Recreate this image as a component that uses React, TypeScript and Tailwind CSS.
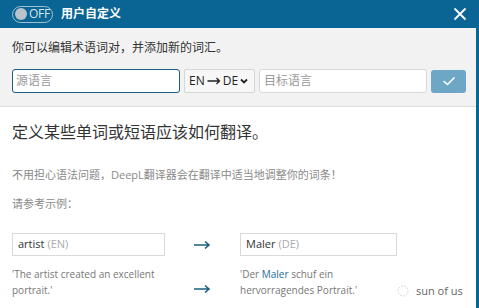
import React from "react";

const font = "font-['Open_Sans','Noto_Sans_CJK_SC',sans-serif]";

const Arrow = () => (
  <svg width="18" height="10" viewBox="0 0 18 10" className="text-[#1d5f80]">
    <path d="M1 5h15M12 1.5l4 3.5-4 3.5" fill="none" stroke="currentColor" strokeWidth="1.6" />
  </svg>
);

export default function App() {
  return (
    <div className={`relative w-[479px] h-[308px] bg-white flex flex-col overflow-hidden ${font}`}>
      {/* header */}
      <div className="h-[28px] bg-[#0b6594] flex items-center pl-[12px] pr-[12px]">
        <div className="w-[41px] h-[17px] rounded-full border border-[#9fc1d6] flex items-center pl-[2px] gap-[2px]">
          <div className="w-[12px] h-[12px] rounded-full bg-[#b9c3cc]" />
          <span className="text-[12px] leading-none text-[#d6e4ee] tracking-tight">OFF</span>
        </div>
        <span className="ml-[8px] text-[12px] font-bold text-white">用户自定义</span>
        <svg className="ml-auto" width="14" height="14" viewBox="0 0 14 14">
          <path d="M1.5 1.5l11 11M12.5 1.5l-11 11" stroke="white" strokeWidth="1.8" />
        </svg>
      </div>

      <div className="flex-1 flex border-r-[3px] border-[#0b6594]">
        <div className="flex-1 flex flex-col">
          {/* gray editing area */}
          <div className="bg-[#f2f2f2] border-b border-[#dcdcdc] h-[79px] pl-[12px] pr-[10px] pt-[12px]">
            <div className="text-[12px] text-[#333] leading-[16px]">你可以编辑术语词对，并添加新的词汇。</div>
            <div className="flex items-center gap-[4px] mt-[13px]">
              <div className="w-[168px] h-[24px] bg-white border border-[#1d5f80] rounded-[3px] flex items-center px-[3px] text-[12px] text-[#9a9a9a]">
                源语言
              </div>
              <div className="w-[71px] h-[24px] bg-[#f7f7f7] border border-[#d6d6d6] rounded-[2px] flex items-center pl-[4px] text-[12px] text-[#222] whitespace-nowrap">
                <span>EN</span>
                <svg width="14" height="8" viewBox="0 0 14 8" className="mx-[2px]">
                  <path d="M0.5 4h12M9.5 1l3 3-3 3" fill="none" stroke="#222" strokeWidth="1.3" />
                </svg>
                <span>DE</span>
                <svg width="8" height="6" viewBox="0 0 8 6" className="ml-[2px]">
                  <path d="M1 1.5l3 3 3-3" fill="none" stroke="#222" strokeWidth="1.8" />
                </svg>
              </div>
              <div className="w-[168px] h-[24px] bg-white border border-[#d9d9d9] rounded-[3px] flex items-center px-[4px] text-[12px] text-[#9a9a9a]">
                目标语言
              </div>
              <div className="w-[35px] h-[23px] bg-[#6ea6c6] rounded-[3px] flex items-center justify-center">
                <svg width="14" height="10" viewBox="0 0 14 10">
                  <path d="M1.5 5l4 3.5 7-7" fill="none" stroke="white" strokeWidth="1.6" />
                </svg>
              </div>
            </div>
          </div>

          {/* white explanation area */}
          <div className="pl-[12px] pt-[14px] flex flex-col">
            <div className="text-[16px] text-[#333] leading-[22px]">定义某些单词或短语应该如何翻译。</div>
            <div className="mt-[25px] text-[11px] text-[#8a8a8a] leading-[14px]">
              不用担心语法问题，DeepL翻译器会在翻译中适当地调整你的词条！
            </div>
            <div className="mt-[15px] text-[11px] text-[#8a8a8a] leading-[14px]">请参考示例：</div>

            <div className="mt-[22px] grid grid-cols-[153px_75px_157px] items-center">
              <div className="h-[23px] border border-[#d9d9d9] flex items-center px-[5px] text-[11px]">
                <span className="text-[#333] font-medium">artist</span>
                <span className="ml-[3px] text-[#aaa]">(EN)</span>
              </div>
              <div className="flex justify-center pr-[2px]"><Arrow /></div>
              <div className="h-[23px] border border-[#d9d9d9] flex items-center px-[5px] text-[11px]">
                <span className="text-[#333] font-medium">Maler</span>
                <span className="ml-[3px] text-[#aaa]">(DE)</span>
              </div>

              <div className="mt-[10px] text-[10px] leading-[16px] text-[#777] whitespace-nowrap">
                'The artist created an excellent
                <br />
                portrait.'
              </div>
              <div className="mt-[24px] flex justify-center pr-[2px]"><Arrow /></div>
              <div className="mt-[10px] text-[10px] leading-[16px] text-[#777] whitespace-nowrap">
                'Der <span className="text-[#1d6da0]">Maler</span> schuf ein
                <br />
                hervorragendes Portrait.'
              </div>
            </div>
          </div>
        </div>
      </div>

      {/* watermark */}
      <div className="absolute left-[395px] top-[283px] flex items-center gap-[5px] text-[11px] text-[#666] whitespace-nowrap">
        <svg width="16" height="14" viewBox="0 0 16 14">
          <circle cx="8" cy="7" r="5" fill="none" stroke="#ccc" strokeWidth="1" strokeDasharray="1.5 1.5" />
        </svg>
        sun of us
      </div>
    </div>
  );
}
